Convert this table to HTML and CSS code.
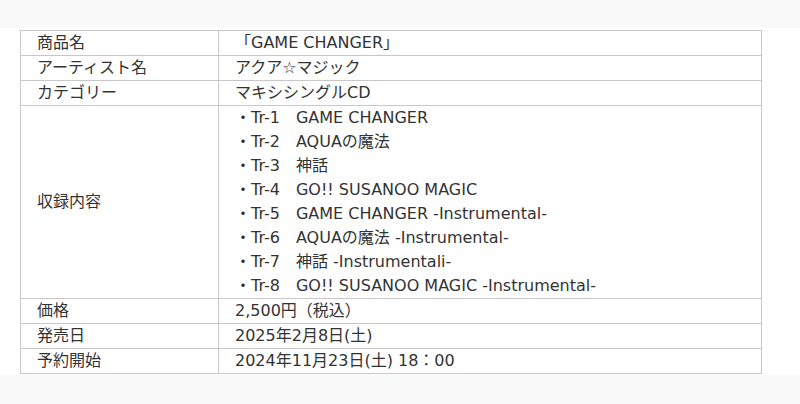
FILE: index.html
```html
<!DOCTYPE html>
<html lang="ja">
<head>
<meta charset="utf-8">
<title>GAME CHANGER</title>
<link rel="stylesheet" href="styles.css">
</head>
<body>
<div class="top-band"></div>
<div class="content">
  <table class="spec">
    <tr><th>商品名</th><td>「GAME CHANGER」</td></tr>
    <tr><th>アーティスト名</th><td>アクア☆マジック</td></tr>
    <tr><th>カテゴリー</th><td>マキシシングルCD</td></tr>
    <tr><th>収録内容</th><td>
      <div>・Tr-1　GAME CHANGER</div>
      <div>・Tr-2　AQUAの魔法</div>
      <div>・Tr-3　神話</div>
      <div>・Tr-4　GO!! SUSANOO MAGIC</div>
      <div>・Tr-5　GAME CHANGER -Instrumental-</div>
      <div>・Tr-6　AQUAの魔法 -Instrumental-</div>
      <div>・Tr-7　神話 -Instrumentali-</div>
      <div>・Tr-8　GO!! SUSANOO MAGIC -Instrumental-</div>
    </td></tr>
    <tr><th>価格</th><td>2,500円（税込）</td></tr>
    <tr><th>発売日</th><td>2025年2月8日(土)</td></tr>
    <tr><th>予約開始</th><td>2024年11月23日(土) 18：00</td></tr>
  </table>
</div>
<div class="bottom-band"></div>
</body>
</html>
```
FILE: styles.css
```css
html, body {
  margin: 0;
  padding: 0;
  background: #f9f9f9;
}
body {
  font-family: "DejaVu Sans", "Noto Sans CJK JP", sans-serif;
  font-size: 16px;
  color: #333;
}
.top-band {
  height: 28px;
  background: #f9f9f9;
}
.content {
  background: #fff;
  padding: 2px 0 1px 20px;
}
.spec {
  border-collapse: collapse;
  width: 742px;
}
.spec th,
.spec td {
  border: 1px solid #c8c8c8;
  padding: 0 16px;
  line-height: 24px;
  text-align: left;
  font-weight: normal;
  vertical-align: middle;
}
.spec th {
  width: 165px;
}
.bottom-band {
  height: 30px;
  background: #f9f9f9;
}
```
